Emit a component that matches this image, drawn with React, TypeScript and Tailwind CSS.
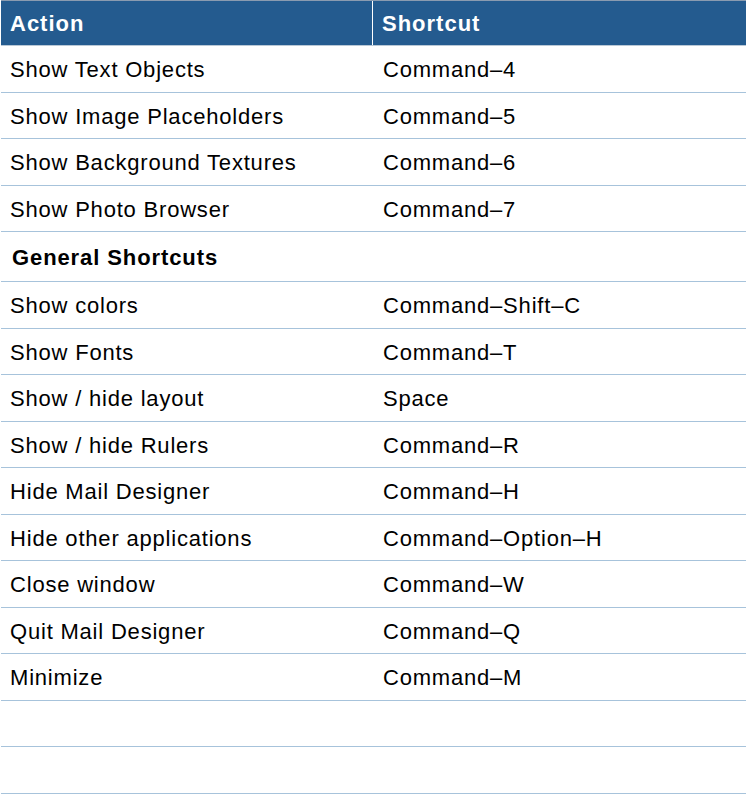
const rows: [string, string][] = [
  ["Show Text Objects", "Command–4"],
  ["Show Image Placeholders", "Command–5"],
  ["Show Background Textures", "Command–6"],
  ["Show Photo Browser", "Command–7"],
];

const general: [string, string][] = [
  ["Show colors", "Command–Shift–C"],
  ["Show Fonts", "Command–T"],
  ["Show / hide layout", "Space"],
  ["Show / hide Rulers", "Command–R"],
  ["Hide Mail Designer", "Command–H"],
  ["Hide other applications", "Command–Option–H"],
  ["Close window", "Command–W"],
  ["Quit Mail Designer", "Command–Q"],
  ["Minimize", "Command–M"],
  ["", ""],
  ["", ""],
];

const Row = ({ action, shortcut }: { action: string; shortcut: string }) => (
  <div className="flex h-[46.5px] items-center border-b border-[#a7c3db] pt-[2px] text-[22px] tracking-[0.8px] text-black">
    <div className="w-[373px] pl-[9px]">{action}</div>
    <div className="pl-[9px]">{shortcut}</div>
  </div>
);

export default function App() {
  return (
    <div className="h-[796px] w-[748px] overflow-hidden bg-white pl-px pr-[2px] font-['Liberation_Sans',Arial,sans-serif]">
      <div className="border-t border-[#8a9bb0]">
        {/* Header */}
        <div className="flex h-[45px] border-b border-[#b9c8d6] bg-[#245b8f] text-[22px] font-bold tracking-[1px] text-white">
          <div className="flex w-[372px] items-center border-r border-white pl-[9px]">Action</div>
          <div className="flex items-center pl-[9px]">Shortcut</div>
        </div>

        {rows.map(([a, s]) => (
          <Row key={a} action={a} shortcut={s} />
        ))}

        <div className="flex h-[50px] items-center border-b border-[#a7c3db] pl-[11px] pt-[2px] text-[22px] font-bold tracking-[0.9px] text-black">
          General Shortcuts
        </div>

        {general.map(([a, s], i) => (
          <Row key={i} action={a} shortcut={s} />
        ))}
      </div>
    </div>
  );
}
